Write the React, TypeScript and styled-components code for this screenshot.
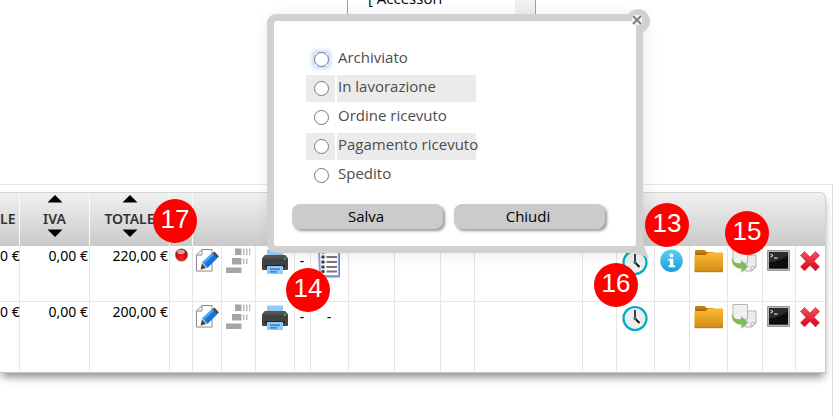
import React from "react";
import styled, { createGlobalStyle, css } from "styled-components";

const Global = createGlobalStyle`
  * { box-sizing: border-box; }
  html, body, #root { height: 100%; margin: 0; }
  body { background: #fff; font-family: "Noto Sans", "Open Sans", sans-serif; font-size: 14px; color: #000; overflow: hidden; }
  button { font: inherit; }
`;

const Page = styled.div`
  position: relative;
  display: flex;
  flex-direction: column;
  min-height: 100vh;
  overflow: hidden;
`;

const Filters = styled.div`
  display: flex;
  height: 184px;
  padding-left: 347px;
  overflow: hidden;
`;

const CategoryBox = styled.div`
  display: flex;
  width: 189px;
  height: 72px;
  margin-top: -13px;
  border: 1px solid #a0a0a0;
`;

const CategoryList = styled.select`
  flex: 1;
  appearance: none;
  border: 0;
  outline: 0;
  padding: 0 0 0 20px;
  overflow: hidden;
  background: #fff;
  font: 15px/20px "Open Sans", sans-serif;
  option { padding: 0; min-height: 20px; color: #000; }
`;

const Track = styled.div`
  width: 20px;
  background: #f0f0f0;
`;

const Card = styled.main`
  flex: 1;
  border-top: 1px solid #e6e6e6;
  border-right: 1px solid #dcdcdc;
  padding: 7px 6px 0 0;
`;

const Grid = styled.table`
  width: 100%;
  table-layout: fixed;
  border-collapse: separate;
  border-spacing: 0;
  border-top-right-radius: 6px;
  border-bottom-right-radius: 4px;
  box-shadow: 0 6px 8px -2px #8c8c8c;
  background: #fff;
`;

const Col = styled.col<{ $w?: number }>`
  width: ${(p) => (p.$w ? `${p.$w}px` : "auto")};
`;

const Head = styled.th<{ $line?: boolean }>`
  height: 54px;
  padding: 0;
  border-top: 1px solid #d2d2d2;
  border-right: ${(p) => (p.$line ? "1px solid #fafafa" : "0")};
  background: linear-gradient(#f0f0f0, #cacaca);
  color: #333;
  font-size: 14px;
  font-weight: 600;
  vertical-align: top;
  overflow: hidden;
  &:last-child { border-right: 1px solid #d2d2d2; border-top-right-radius: 6px; }
`;

const SortButton = styled.button`
  display: flex;
  flex-direction: column;
  align-items: center;
  width: 100%;
  padding: 2px 0 0;
  border: 0;
  background: none;
  color: inherit;
  svg { display: block; }
`;

const HeadLabel = styled.span`
  display: block;
  padding-top: 6px;
  line-height: 20px;
`;

const ClippedLabel = styled(HeadLabel)`
  padding: 16px 5px 0 0;
  text-align: right;
  direction: ltr;
`;

const Cell = styled.td<{ $kind?: "money" | "icon"; $tall?: boolean }>`
  height: ${(p) => (p.$tall ? 71 : 56)}px;
  padding: 0;
  border-right: 1px solid #e6e6e8;
  border-bottom: 1px solid ${(p) => (p.$tall ? "#c4c4c4" : "#e6e6e8")};
  vertical-align: top;
  line-height: 20px;
  white-space: nowrap;
  ${(p) =>
    p.$kind === "money"
      ? css`
          text-align: right;
          padding-right: 1px;
          &:first-child { padding-right: 2px; }
        `
      : css`
          text-align: center;
          padding: 2px 1px 0 0;
        `}
  &:last-child { border-right-color: #c8c8c8; }
`;

const Dash = styled.span`
  display: block;
  padding-top: 3px;
`;

const IconButton = styled.button`
  display: block;
  margin: 0 auto;
  padding: 0;
  border: 0;
  background: none;
  svg { display: block; }
`;

const Dialog = styled.form`
  position: absolute;
  left: 267px;
  top: 14px;
  width: 376px;
  height: 239px;
  padding: 25px 30px 17px 18px;
  border: 7px solid #d1d1d1;
  border-radius: 9px;
  background: #fff;
  background-clip: padding-box;
  box-shadow: 2px 2px 16px rgba(0, 0, 0, 0.09);
  display: flex;
  flex-direction: column;
  justify-content: space-between;
  font-family: "Open Sans", "Noto Sans", sans-serif;
  font-size: 15px;
`;

const Tail = styled.svg`
  position: absolute;
  right: -14px;
  bottom: -14px;
`;

const CloseButton = styled.button`
  position: absolute;
  right: -14px;
  top: -13px;
  padding: 0;
  border: 0;
  background: none;
  svg { display: block; }
`;

const Options = styled.div`
  display: grid;
  gap: 2px;
  width: 170px;
  margin-left: 14px;
`;

const OptionRow = styled.div<{ $shaded: boolean }>`
  display: grid;
  grid-template-columns: 29px minmax(0, 1fr);
  gap: 2px;
  height: 27px;
  > * { background: ${(p) => (p.$shaded ? "#ebebeb" : "#fff")}; }
`;

const RadioCell = styled.span`
  display: flex;
  align-items: center;
  padding-left: 8px;
`;

const Radio = styled.input<{ $glow: boolean }>`
  width: 15px;
  height: 15px;
  margin: 0;
  background: #fff;
  box-shadow: ${(p) => (p.$glow ? "0 0 5px 1px #b4cdfa" : "none")};
`;

const OptionLabel = styled.label`
  padding-left: 1px;
  color: #4d4d4d;
  line-height: 22px;
  white-space: nowrap;
`;

const Actions = styled.div`
  display: grid;
  grid-template-columns: 1fr 1fr;
  gap: 11px;
  margin-right: 1px;
`;

const ActionButton = styled.button`
  height: 25px;
  padding: 0 3px 2px 0;
  border: 0;
  border-radius: 8px;
  background: #cbcbcb;
  box-shadow: 2px 2px 3px #999;
  color: #000;
  line-height: 22px;
`;

const Badge = styled.span<{ $x: number; $y: number }>`
  position: absolute;
  left: ${(p) => p.$x}px;
  top: ${(p) => p.$y}px;
  width: 44px;
  height: 44px;
  border-radius: 50%;
  background: #fe0000;
  color: #fff;
  font: 26px/41px "Liberation Sans", Arial, sans-serif;
  text-align: center;
`;

const Arrow = ({ down }: { down?: boolean }) => (
  <svg width="16" height="8" viewBox="0 0 16 8">
    <path d={down ? "M.5.5h15L8 8z" : "M.5 7.5h15L8 0z"} fill="#000" />
  </svg>
);

const Ball = () => (
  <svg width="14" height="28" viewBox="0 0 14 28">
    <defs>
      <radialGradient id="ball" cx=".5" cy=".75" r=".7">
        <stop offset="0" stopColor="#ff2a20" />
        <stop offset=".5" stopColor="#d80d0d" />
        <stop offset="1" stopColor="#7c1414" />
      </radialGradient>
    </defs>
    <circle cx="7.500" cy="7" r="6.300" fill="url(#ball)" stroke="#a79a9a" strokeWidth=".6" />
    <ellipse cx="7" cy="4" rx="3.800" ry="2.200" fill="#fff" opacity=".6" />
  </svg>
);

const Edit = () => (
  <svg width="24" height="28" viewBox="0 0 24 28">
    <path d="M7 1.500h10v21.500H1.500V7z" fill="#fff" stroke="#888" strokeLinejoin="round" />
    <path d="M7 1.500V7H1.500" fill="none" stroke="#888" />
    <path d="M19.500 3.500l4.500 5-2.500 2-4.500-5z" fill="#4b4b4b" />
    <path d="M17 5.200l5 5.300-9.500 9.500-5.500-5.500z" fill="#1676d8" />
    <path d="M17 5.200l1.800 1.900-10 9L7 14.500z" fill="#4ea5f0" />
    <path d="M7.500 14.500l4.800 5.300L6 21.500z" fill="#e6cda6" />
    <path d="M7 15.500l4 4.500-5.500 1.500z" fill="#444" />
  </svg>
);

const Blocks = () => (
  <svg width="25" height="28" viewBox="0 0 25 28" fill="#a6a6a6">
    <path d="M9 .5h6.500v6.500H9zM6 10h9.500v6.500H6zM0 19.500h15.500v5.500H0z" />
    <path d="M17 .5h1.500v6.500H17zM20 .5h1.500v6.500H20zM23 .5h1.300v6.500H23zM17 10.500h1.500v5.500H17zM20 10.500h1.500v5.500H20z" fill="#bdbdbd" />
  </svg>
);

const Printer = () => (
  <svg width="26" height="28" viewBox="0 0 26 28">
    <path d="M5 1.500h16v8H5z" fill="#90caf9" />
    <path d="M3 7h20l3 3.500v10.500q0 1-1 1H1q-1 0-1-1V10.500z" fill="#424242" />
    <path d="M0 10.500L3 7h20l3 3.500z" fill="#555" />
    <path d="M3 17h20v2H3z" fill="#212121" />
    <path d="M5 18h16v8H5z" fill="#90caf9" />
    <path d="M8 20.500h10v1.200H8zM8 23.300h7v1.200H8z" fill="#1976d2" />
    <path d="M22 10h2v1.500h-2z" fill="#00e676" />
  </svg>
);

const List = () => (
  <svg width="24" height="30" viewBox="0 0 24 30">
    <path d="M2 1H22v27H3z" fill="#fff" stroke="#88a4dc" strokeWidth="2" />
    <path d="M22.500 3v26H4" fill="none" stroke="#6486c8" />
    {[3, 8, 13, 18, 22.5].map((y) => (
      <React.Fragment key={y}>
        <circle cx="6" cy={y + 1} r="1.800" fill="#444" />
        <rect x="9.500" y={y} width="10.500" height="2" fill="#777" />
      </React.Fragment>
    ))}
  </svg>
);

const Clock = () => (
  <svg width="26" height="28" viewBox="0 0 26 28">
    <circle cx="13" cy="14.500" r="11.500" fill="#eee" stroke="#00acc1" strokeWidth="2.200" />
    <path d="M13 6v9" stroke="#222" strokeWidth="1.700" />
    <path d="M13 14.500l4.500 4.500" stroke="#111" strokeWidth="2" />
    <circle cx="13" cy="14.500" r="1.500" fill="#00838f" />
  </svg>
);

const Info = () => (
  <svg width="23" height="28" viewBox="0 0 23 28">
    <defs>
      <linearGradient id="info" x2="0" y2="1">
        <stop offset="0" stopColor="#62cff5" />
        <stop offset="1" stopColor="#139fd9" />
      </linearGradient>
    </defs>
    <circle cx="11.500" cy="12.700" r="11.300" fill="url(#info)" />
    <circle cx="11.500" cy="7.500" r="2" fill="#fff" />
    <path d="M8.500 10.700h4.800v6.500H15v2H8.500v-2H10v-4.500H8.500z" fill="#fff" />
  </svg>
);

const Folder = () => (
  <svg width="29" height="28" viewBox="0 0 29 28">
    <defs>
      <linearGradient id="folder" x2="0" y2="1">
        <stop offset="0" stopColor="#fdb92f" />
        <stop offset="1" stopColor="#cf8c16" />
      </linearGradient>
    </defs>
    <path d="M1 3q0-1 1-1h8.500l2 2H19q1 0 1 1v2H1z" fill="#c07f0d" />
    <path d="M2 5h18v3H2z" fill="#a86c07" />
    <path d="M.5 7h11L14 4.500h15V24H.5z" fill="url(#folder)" />
    <path d="M.5 23.300H29v.9H.5z" fill="#b37a18" />
  </svg>
);

const Copy = () => (
  <svg width="25" height="28" viewBox="0 0 25 28">
    <path d="M1 .5h14.500v15H1z" fill="#f0f0f0" stroke="#b5b5b5" />
    <path d="M15.500 7H24v12l-4 4h-7v-8h2.500z" fill="#ececec" stroke="#b5b5b5" />
    <path d="M24 18.500l-4.500.5-.5 4z" fill="#fff" stroke="#aaa" strokeWidth=".8" />
    <path d="M.5 9q0 7 8.500 7v-4l7 6.300L9.500 25v-4Q-2 20 .5 9z" fill="#82b95a" />
  </svg>
);

const Terminal = () => (
  <svg width="23" height="28" viewBox="0 0 23 28">
    <path d="M.5 2.500h22v20H.5z" fill="#b9b9b9" stroke="#999" />
    <path d="M2 4h19v16.500H2z" fill="#2b2b2b" />
    <path d="M2 14q8 1 19-7v13.500H2z" fill="#0d0d0d" />
    <path d="M3.500 6l2.500 1.500L3.500 9M7 10h3.500" fill="none" stroke="#fff" />
  </svg>
);

const Delete = () => (
  <svg width="20" height="28" viewBox="0 0 20 28">
    <defs>
      <linearGradient id="del" x2="0" y2="1">
        <stop offset="0" stopColor="#f7505a" />
        <stop offset="1" stopColor="#d9001b" />
      </linearGradient>
    </defs>
    <path
      d="M4.500 3.500L10 9l5.500-5.500L19.500 7.500 14 13.200l5.500 5.600-4 4L10 17.300l-5.500 5.500-4-4L6 13.200.5 7.500z"
      fill="url(#del)" stroke="#cf1830" strokeWidth=".6" strokeLinejoin="round"
    />
  </svg>
);

const icons = {
  ball: ["Stato", Ball], edit: ["Modifica", Edit], blocks: ["Dettagli", Blocks], printer: ["Stampa", Printer],
  list: ["Elenco", List], clock: ["Cronologia", Clock], info: ["Informazioni", Info], folder: ["Cartella", Folder],
  copy: ["Duplica", Copy], terminal: ["Console", Terminal], del: ["Elimina", Delete],
} as const;

type Entry = keyof typeof icons | "" | "-";

const widths = [20, 70, 80, 23, 29, 34, 39, 16, 38, 46, 46, 34, undefined, 34, 38, 35, 38, 35, 33, 30];

const rows: { money: string[]; entries: Entry[] }[] = [
  {
    money: ["0 €", "0,00 €", "220,00 €"],
    entries: ["ball", "edit", "blocks", "printer", "-", "list", "", "", "", "", "", "clock", "info", "folder", "copy", "terminal", "del"],
  },
  {
    money: ["0 €", "0,00 €", "200,00 €"],
    entries: ["", "edit", "blocks", "printer", "-", "-", "", "", "", "", "", "clock", "", "folder", "copy", "terminal", "del"],
  },
];

const states = ["Archiviato", "In lavorazione", "Ordine ricevuto", "Pagamento ricevuto", "Spedito"];

const badges = [
  { n: 17, x: 153, y: 199 },
  { n: 13, x: 645, y: 203 },
  { n: 15, x: 725, y: 211 },
  { n: 16, x: 594, y: 263 },
  { n: 14, x: 286, y: 268 },
];

function EntryCell({ entry, tall }: { entry: Entry; tall: boolean }) {
  if (entry === "") return <Cell $tall={tall} />;
  if (entry === "-") return <Cell $tall={tall}><Dash>-</Dash></Cell>;
  const [label, Icon] = icons[entry];
  return (
    <Cell $kind="icon" $tall={tall}>
      <IconButton type="button" aria-label={label}><Icon /></IconButton>
    </Cell>
  );
}

export default function App() {
  return (
    <Page>
      <Global />
      <Filters>
        <CategoryBox>
          <CategoryList size={3} aria-label="Categoria">
            <option>[ Accessori</option>
          </CategoryList>
          <Track />
        </CategoryBox>
      </Filters>

      <Card>
        <Grid>
          <colgroup>{widths.map((w, i) => <Col key={i} $w={w} />)}</colgroup>
          <thead>
            <tr>
              <Head $line><ClippedLabel>LE</ClippedLabel></Head>
              {["IVA", "TOTALE"].map((title) => (
                <Head key={title} $line>
                  <SortButton type="button"><Arrow /><HeadLabel>{title}</HeadLabel><Arrow down /></SortButton>
                </Head>
              ))}
              <Head $line />
              {widths.slice(4).map((_, i) => <Head key={i} />)}
            </tr>
          </thead>
          <tbody>
            {rows.map((row, r) => (
              <tr key={r}>
                {row.money.map((m, i) => <Cell key={i} $kind="money" $tall={r === 1}>{m}</Cell>)}
                {row.entries.map((e, i) => <EntryCell key={i} entry={e} tall={r === 1} />)}
              </tr>
            ))}
          </tbody>
        </Grid>
      </Card>

      <Dialog onSubmit={(e) => e.preventDefault()}>
        <Tail width="20" height="30" viewBox="0 0 20 30">
          <path d="M7 4h6q0 14 6.500 25Q13 25 5 23.500V17h2z" fill="#d1d1d1" />
        </Tail>
        <CloseButton type="button" aria-label="Chiudi finestra">
          <svg width="26" height="26" viewBox="0 0 26 26">
            <path d="M2 13A12 12 0 1 1 19 24V13z" fill="#d1d1d1" />
            <rect x="8" y="7" width="10" height="10" rx="2" fill="#f4f4f4" />
            <path d="M9 8l8 8M17 8l-8 8" stroke="#808080" strokeWidth="2" />
          </svg>
        </CloseButton>
        <Options role="radiogroup">
          {states.map((s, i) => (
            <OptionRow key={s} $shaded={i % 2 === 1}>
              <RadioCell><Radio type="radio" name="stato" id={`stato-${i}`} $glow={i === 0} /></RadioCell>
              <OptionLabel htmlFor={`stato-${i}`}>{s}</OptionLabel>
            </OptionRow>
          ))}
        </Options>
        <Actions>
          <ActionButton type="submit">Salva</ActionButton>
          <ActionButton type="button">Chiudi</ActionButton>
        </Actions>
      </Dialog>

      {badges.map((b) => <Badge key={b.n} $x={b.x} $y={b.y}>{b.n}</Badge>)}
    </Page>
  );
}
